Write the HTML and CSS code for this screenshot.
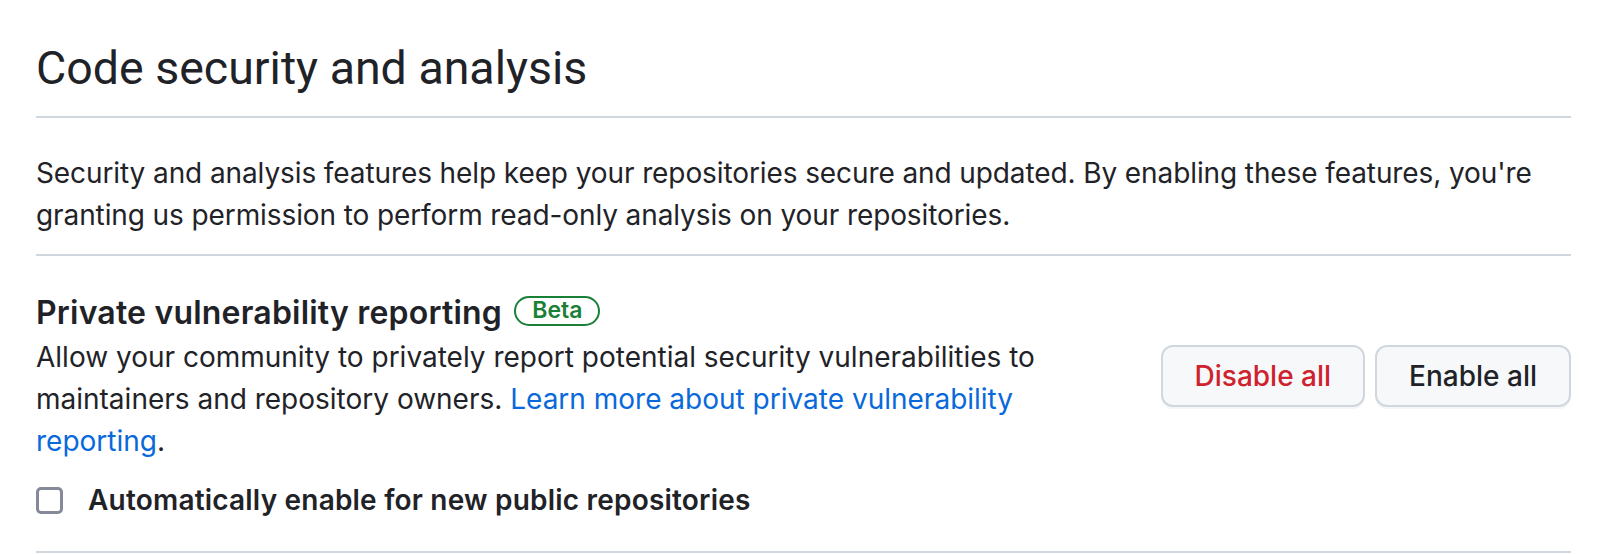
FILE: index.html
```html
<!DOCTYPE html>
<html lang="en">
<head>
<meta charset="utf-8">
<title>Code security and analysis</title>
<link rel="stylesheet" href="styles.css">
</head>
<body>
<div class="page">
  <div class="subhead">
    <h2 class="subhead-heading">Code security and analysis</h2>
  </div>
  <p class="intro">Security and analysis features help keep your repositories secure and updated. By enabling these features, you're granting us permission to perform read-only analysis on your repositories.</p>
  <div class="feature">
    <div class="feature-row">
      <div class="feature-text">
        <h3 class="feature-title">Private vulnerability reporting <span class="label">Beta</span></h3>
        <p class="feature-desc">Allow your community to privately report potential security vulnerabilities to maintainers and repository owners. <a class="link" href="#">Learn more about private vulnerability reporting</a>.</p>
      </div>
      <div class="feature-actions">
        <button class="btn btn-danger" type="button">Disable all</button>
        <button class="btn" type="button">Enable all</button>
      </div>
    </div>
    <label class="check">
      <span class="checkbox"></span>
      <span class="check-label">Automatically enable for new public repositories</span>
    </label>
  </div>
</div>
</body>
</html>
```

FILE: styles.css
```css
* { box-sizing: border-box; }

body {
  margin: 0;
  background: #ffffff;
  color: #1f2328;
  font-family: Inter, "Noto Sans", "Liberation Sans", sans-serif;
}

.page {
  padding: 38px 43px 0 36px;
}

.subhead {
  border-bottom: 2px solid #d0d7de;
  padding-bottom: 18px;
}

.subhead-heading {
  margin: 0;
  font-family: Roboto, Inter, "Liberation Sans", sans-serif;
  font-size: 46.5px;
  font-weight: 400;
  line-height: 60px;
}

.intro {
  margin: 34px 0 0;
  font-size: 28px;
  line-height: 42px;
  letter-spacing: -0.1px;
  padding-bottom: 18px;
  border-bottom: 2px solid #d0d7de;
}

.feature {
  padding-top: 33px;
  padding-bottom: 30px;
  border-bottom: 2px solid #d0d7de;
}

.feature-row {
  display: flex;
  align-items: center;
  justify-content: space-between;
}

.feature-text {
  max-width: 1060px;
}

.feature-title {
  margin: 0;
  font-size: 32px;
  font-weight: 600;
  letter-spacing: 0.2px;
  line-height: 47px;
}

.label {
  display: inline-flex;
  align-items: center;
  height: 30px;
  padding: 0 16px;
  margin-left: 4px;
  border: 2px solid #1a7f37;
  border-radius: 999px;
  color: #1a7f37;
  font-size: 23px;
  font-weight: 600;
  letter-spacing: 0;
  vertical-align: 6px;
}

.feature-desc {
  margin: 0;
  font-size: 28px;
  line-height: 42px;
}

.link {
  color: #0969da;
  text-decoration: none;
}

.feature-actions {
  display: flex;
  gap: 10px;
}

.btn {
  height: 62px;
  padding: 0 32px;
  border: 2px solid #d0d7de;
  border-radius: 12px;
  background: #f6f8fa;
  box-shadow: 0 2px 0 rgba(31, 35, 40, 0.04);
  color: #1f2328;
  font-family: inherit;
  font-size: 28px;
  font-weight: 500;
}

.btn-danger {
  color: #cf222e;
}

.check {
  display: flex;
  align-items: center;
  gap: 25px;
  margin-top: 17px;
  font-size: 28px;
  font-weight: 600;
  letter-spacing: 0.2px;
  line-height: 42px;
}

.checkbox {
  width: 27px;
  height: 27px;
  flex: none;
  border: 3px solid #858a98;
  border-radius: 5px;
  background: #ffffff;
}
```
